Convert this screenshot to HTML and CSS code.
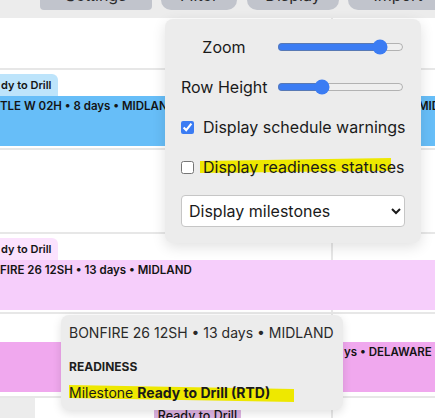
FILE: index.html
```html
<!DOCTYPE html>
<html>
<head>
<meta charset="utf-8">
<title>Schedule</title>
<link rel="stylesheet" href="styles.css">
</head>
<body>
<div class="page">
  <header class="toolbar">
    <div class="tb-btn tb-settings">Settings</div>
    <div class="tb-btn tb-filter">Filter</div>
    <div class="tb-btn tb-display">Display</div>
    <div class="tb-btn tb-import">Import</div>
  </header>

  <main class="timeline">
    <div class="row row-1"></div>
    <div class="row row-2">
      <div class="tab tab-blue">dy to Drill</div>
      <div class="bar bar-blue">
        <span class="bar-label label-split">TLE W 02H • 8 days • MIDLAND</span>
        <span class="bar-label">MIDLAND</span>
      </div>
    </div>
    <div class="row row-3"></div>
    <div class="row row-4">
      <div class="tab tab-pink">dy to Drill</div>
      <div class="bar bar-pink">
        <span class="bar-label">FIRE 26 12SH • 13 days • MIDLAND</span>
      </div>
    </div>
    <div class="row row-5">
      <div class="bar bar-magenta">
        <span class="bar-label">ys • DELAWARE</span>
      </div>
    </div>
    <div class="row row-6">
      <div class="tab tab-purple">Ready to Drill</div>
    </div>
  </main>

  <div class="display-menu">
    <div class="menu-row">
      <span class="slider-label">Zoom</span>
      <input class="slider" type="range" min="0" max="100" value="86">
    </div>
    <div class="menu-row">
      <span class="slider-label">Row Height</span>
      <input class="slider" type="range" min="0" max="100" value="33">
    </div>
    <label class="menu-row check-row">
      <input class="check" type="checkbox" checked>
      <span>Display schedule warnings</span>
    </label>
    <label class="menu-row check-row">
      <input class="check" type="checkbox">
      <span class="hl hl-menu">Display readiness statuses</span>
    </label>
    <select class="menu-select">
      <option>Display milestones</option>
    </select>
  </div>

  <div class="tooltip">
    <div class="tip-title">BONFIRE 26 12SH • 13 days • MIDLAND</div>
    <div class="tip-heading">READINESS</div>
    <div class="tip-line"><span class="hl hl-tip">Milestone <b>Ready to Drill (RTD)</b></span></div>
  </div>
</div>
</body>
</html>
```

FILE: styles.css
```css
* { box-sizing: border-box; }

html, body {
  margin: 0;
  padding: 0;
}

body {
  width: 435px;
  height: 418px;
  overflow: hidden;
  background: #ffffff;
  color: #1c1c1c;
  font-family: Inter, "Noto Sans", "Liberation Sans", sans-serif;
}

.page {
  position: relative;
  width: 435px;
  height: 418px;
  overflow: hidden;
}

/* ---------- top toolbar ---------- */
.toolbar {
  height: 18px;
  background: #ececec;
  display: flex;
  align-items: flex-start;
  gap: 9px;
  padding-left: 40px;
}

.tb-btn {
  flex: none;
  height: 30px;
  margin-top: -20px;
  background: #c1c4cc;
  border-radius: 10px;
  display: flex;
  align-items: flex-end;
  justify-content: center;
  padding-bottom: 7px;
  font-size: 16px;
  line-height: 16px;
  color: #2b2b2b;
}

.tb-settings { width: 112px; border-radius: 4px; }
.tb-filter { width: 76px; }
.tb-display { width: 92px; margin-left: 1px; }
.tb-import { width: 100px; }

/* ---------- timeline grid ---------- */
.timeline {
  background: #ffffff;
}

.row {
  border-bottom: 2px solid #e7e7e7;
  background-image: linear-gradient(#e7e7e7, #e7e7e7);
  background-size: 2px 100%;
  background-position: 331px 0;
  background-repeat: no-repeat;
}

.row-1 { height: 52px; }
.row-2 { height: 80px; padding-top: 4px; }
.row-3 { height: 84px; }
.row-4 { height: 80px; padding-top: 4px; }
.row-5 { height: 84px; padding-top: 28px; }
.row-6 {
  height: 40px;
  border-bottom: none;
  padding: 10px 0 0 154px;
  background-image:
    linear-gradient(#ececec, #ececec),
    linear-gradient(#e7e7e7, #e7e7e7);
  background-size: 35px 100%, 2px 100%;
  background-position: 0 0, 331px 0;
}

.tab {
  display: inline-block;
  vertical-align: top;
  height: 22px;
  padding: 3px 6px 3px 1px;
  font-size: 11px;
  font-weight: 600;
  line-height: 16px;
  color: #141414;
  border-radius: 0 6px 0 0;
  white-space: nowrap;
}

.tab-blue { background: #bde4fb; }
.tab-pink { background: #fbe2fd; }
.tab-purple {
  width: 87px;
  padding: 0;
  font-size: 12.5px;
  font-weight: 500;
  text-align: center;
  border-radius: 3px 3px 0 0;
  background: #ddb3e2;
}

.bar {
  height: 50px;
  display: flex;
  padding-top: 2px;
  font-size: 11.5px;
  font-weight: 600;
  line-height: 16px;
  color: #141414;
  white-space: nowrap;
  overflow: hidden;
}

.bar-label { flex: none; }
.label-split { width: 418px; overflow: hidden; }

.bar-blue { background: #67bef8; }
.bar-pink { background: #f6cefb; }
.bar-magenta {
  background: #f0a8ee;
  padding-left: 344px;
}

/* ---------- display popover ---------- */
.display-menu {
  position: absolute;
  left: 165px;
  top: 19px;
  width: 256px;
  z-index: 5;
  padding: 8px 16px 16px;
  background: #ececec;
  border-radius: 8px;
  box-shadow: 0 4px 14px rgba(0, 0, 0, 0.12);
  accent-color: #3b7cf3;
  font-size: 16px;
  color: #1a1a1a;
}

.menu-row {
  height: 40px;
  display: flex;
  align-items: center;
  white-space: nowrap;
}

.slider-label {
  width: 86px;
  text-align: center;
}

.slider {
  width: 127px;
  margin: 0 0 0 10px;
}

.check-row { gap: 9px; }

.check {
  margin: 0;
  width: 13px;
  height: 13px;
}

.hl {
  position: relative;
  z-index: 0;
}

.hl::before {
  content: "";
  position: absolute;
  z-index: -1;
  background: #eee800;
}

.hl-menu::before {
  left: -3px;
  top: 1px;
  width: 191px;
  height: 15px;
  clip-path: polygon(0 20%, 100% 0, 100% 85%, 0 100%);
}

.menu-select {
  display: block;
  width: 224px;
  height: 32px;
  margin-top: 8px;
  padding: 0 4px 0 3px;
  font-family: inherit;
  font-size: 16px;
  color: #1a1a1a;
  background: #ffffff;
  border: 1px solid #c6c6c6;
  border-radius: 4px;
}

/* ---------- tooltip ---------- */
.tooltip {
  position: absolute;
  left: 61px;
  top: 315px;
  width: 282px;
  height: 95px;
  z-index: 5;
  padding: 8px;
  background: #ececec;
  border-radius: 8px;
  box-shadow: 0 3px 10px rgba(0, 0, 0, 0.12);
  color: #262626;
  white-space: nowrap;
}

.tip-title {
  font-size: 14px;
  line-height: 20px;
  color: #2a2a2a;
}

.tip-heading {
  margin-top: 16px;
  font-size: 12px;
  font-weight: 700;
  line-height: 16px;
  color: #1e1e1e;
}

.tip-line {
  margin-top: 8px;
  font-size: 14px;
  line-height: 20px;
  color: #1a1a1a;
}

.tip-line b { font-weight: 700; }

.hl-tip::before {
  left: 0;
  top: 1px;
  width: 225px;
  height: 17px;
  clip-path: polygon(0 0, 100% 24%, 100% 100%, 0 76%);
}
```
